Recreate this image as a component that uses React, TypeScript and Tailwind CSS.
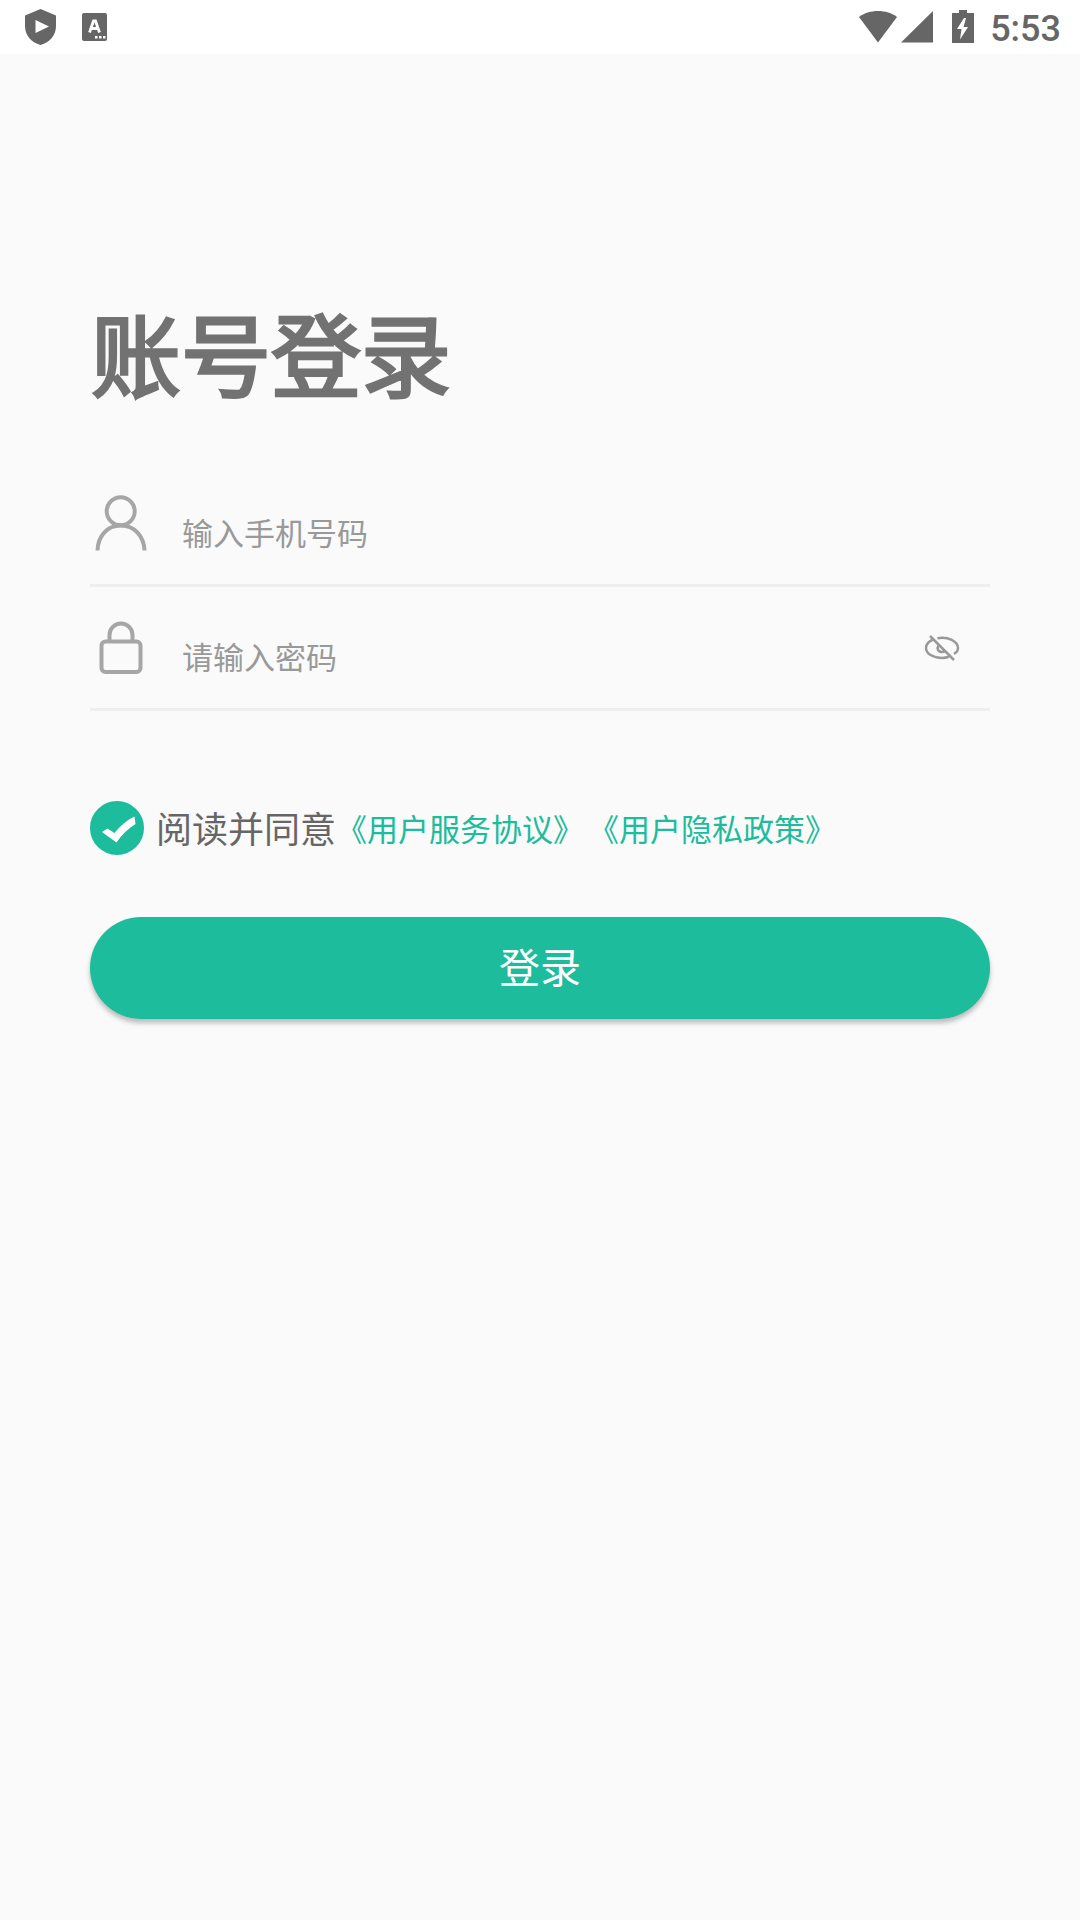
import { useState } from "react";
import type { ReactNode } from "react";

function StatusBar() {
  return (
    <header className="flex h-[54px] items-center justify-between bg-white pr-[19px] pl-[25px] text-[#666666]">
      <div className="flex items-center gap-[26px]">
        <svg width="31" height="36" viewBox="0 0 31 36" fill="currentColor">
          <path
            fillRule="evenodd"
            d="M15.500 0 31 6.500V17c0 9-6 16.500-15.500 19C6 33.500 0 26 0 17V6.500zM10.500 11v13L24 17.500z"
          />
        </svg>
        <svg width="25" height="28" viewBox="0 0 25 28">
          <rect width="25" height="28" rx="2" fill="currentColor" />
          <path
            d="M7.500 19.500 11.500 8h2l4 11.500M9 15.500h7"
            fill="none"
            stroke="#fff"
            strokeWidth="2.800"
          />
          <path d="M13 23h2.500v2.500H13zM17 23h2.500v2.500H17zM21 23h2.500v2.500H21z" fill="#fff" />
        </svg>
      </div>
      <div className="flex items-center">
        <svg width="38" height="32" viewBox="0 0 38 32" fill="currentColor">
          <path d="M0 6C10-2 28-2 38 6L19 31.500z" />
        </svg>
        <svg className="ml-1" width="32" height="32" viewBox="0 0 32 32" fill="currentColor">
          <path d="M32 0v31.500H0z" />
        </svg>
        <svg className="ml-[19px]" width="22" height="34" viewBox="0 0 22 34" fill="currentColor">
          <path
            fillRule="evenodd"
            d="M7 0h8v3h7v30H0V3h7zM12 8 5 19h4.500L8 29.500 16 17h-4.500L14 8z"
          />
        </svg>
        <time className="ml-4 pt-1 font-[Roboto,sans-serif] text-[36px] leading-[50px] font-medium">
          5:53
        </time>
      </div>
    </header>
  );
}

function UserIcon() {
  return (
    <svg width="61" height="61" viewBox="0 0 61 61" fill="none" stroke="#a6a6a6" strokeWidth="4">
      <circle cx="30.700" cy="18.200" r="14" />
      <path d="M7.500 57.500C8 43 17 32.500 30.700 32.500S54 43 54.500 57.500" />
    </svg>
  );
}

function LockIcon() {
  return (
    <svg width="61" height="61" viewBox="0 0 61 61" fill="none" stroke="#a6a6a6" strokeWidth="4">
      <rect x="11.500" y="24.500" width="39" height="30.500" rx="4" />
      <path d="M19.500 24V18a11.500 11.500 0 0 1 23 0V24" />
    </svg>
  );
}

function EyeOffIcon() {
  return (
    <svg width="36" height="28" viewBox="0 0 36 28" fill="none" stroke="#999999" strokeWidth="2.500">
      <path d="M13.500 4.200C24 2 34 7.500 34 14c0 2-1.500 4.500-4 6" />
      <path d="M9 5.500C4.500 7.500 2 10.500 2 14c0 5.500 7 10 16 10 2.500 0 5-.5 7-1.200" />
      <path d="M14.500 11.500c-2 3-.5 6.500 3.500 6.500 1.500 0 2.500-.5 3.500-1.500" />
      <path d="M6 2 30 26" />
    </svg>
  );
}

type FieldProps = {
  id: string;
  label: string;
  type: string;
  icon: ReactNode;
  action?: ReactNode;
};

function Field({ id, label, type, icon, action }: FieldProps) {
  return (
    <div className="flex h-[124px] items-center border-b-3 border-[#eeeeee]">
      <label htmlFor={id} className="shrink-0">
        {icon}
      </label>
      <input
        id={id}
        type={type}
        placeholder={label}
        aria-label={label}
        className="ml-[31px] h-full min-w-0 flex-1 bg-transparent pt-4 text-[31px] text-[#666666] outline-none placeholder:text-[#999999]"
      />
      {action}
    </div>
  );
}

export default function App() {
  const [visible, setVisible] = useState(false);

  return (
    <div className="min-h-screen bg-[#fafafa] font-['Noto_Sans_CJK_SC',sans-serif]">
      <StatusBar />
      <main className="px-[90px] pt-[232px]">
        <h1 className="pl-px text-[90px] leading-[130px] font-normal text-[#727272] [-webkit-text-stroke:3px_#727272]">
          账号登录
        </h1>
        <form className="mt-[47px]" onSubmit={(e) => e.preventDefault()}>
          <Field id="phone" label="输入手机号码" type="tel" icon={<UserIcon />} />
          <Field
            id="password"
            label="请输入密码"
            type={visible ? "text" : "password"}
            icon={<LockIcon />}
            action={
              <button
                type="button"
                aria-label="显示密码"
                className="mr-[30px]"
                onClick={() => setVisible(!visible)}
              >
                <EyeOffIcon />
              </button>
            }
          />
          <div className="mt-[90px] flex h-[54px] items-center">
            <div className="relative size-[54px] shrink-0">
              <input
                id="agree"
                type="checkbox"
                defaultChecked
                className="peer size-full appearance-none rounded-full border-2 border-[#1cbc9c] checked:bg-[#1cbc9c]"
              />
              <svg
                className="pointer-events-none absolute inset-0 hidden peer-checked:block"
                width="54"
                height="54"
                viewBox="0 0 54 54"
                fill="#fff"
              >
                <path d="M12 31 17.500 27.500 24.500 32C30 25 37 19 44.500 15.500L45.500 23C38 27.500 32 33.500 26.500 41.500z" />
              </svg>
            </div>
            <label htmlFor="agree" className="ml-3 pb-0.5 text-[36px] text-[#666666]">
              阅读并同意
            </label>
            <div className="flex gap-1 text-[31px] text-[#1cbc9c]">
              <a href="#agreement">《用户服务协议》</a>
              <a href="#privacy">《用户隐私政策》</a>
            </div>
          </div>
          <button
            type="submit"
            className="mt-[62px] h-[102px] w-full rounded-full bg-[#1cbc9c] pb-1 text-[41px] text-white shadow-[0_4px_5px_rgba(0,0,0,0.25)]"
          >
            登录
          </button>
        </form>
      </main>
    </div>
  );
}
